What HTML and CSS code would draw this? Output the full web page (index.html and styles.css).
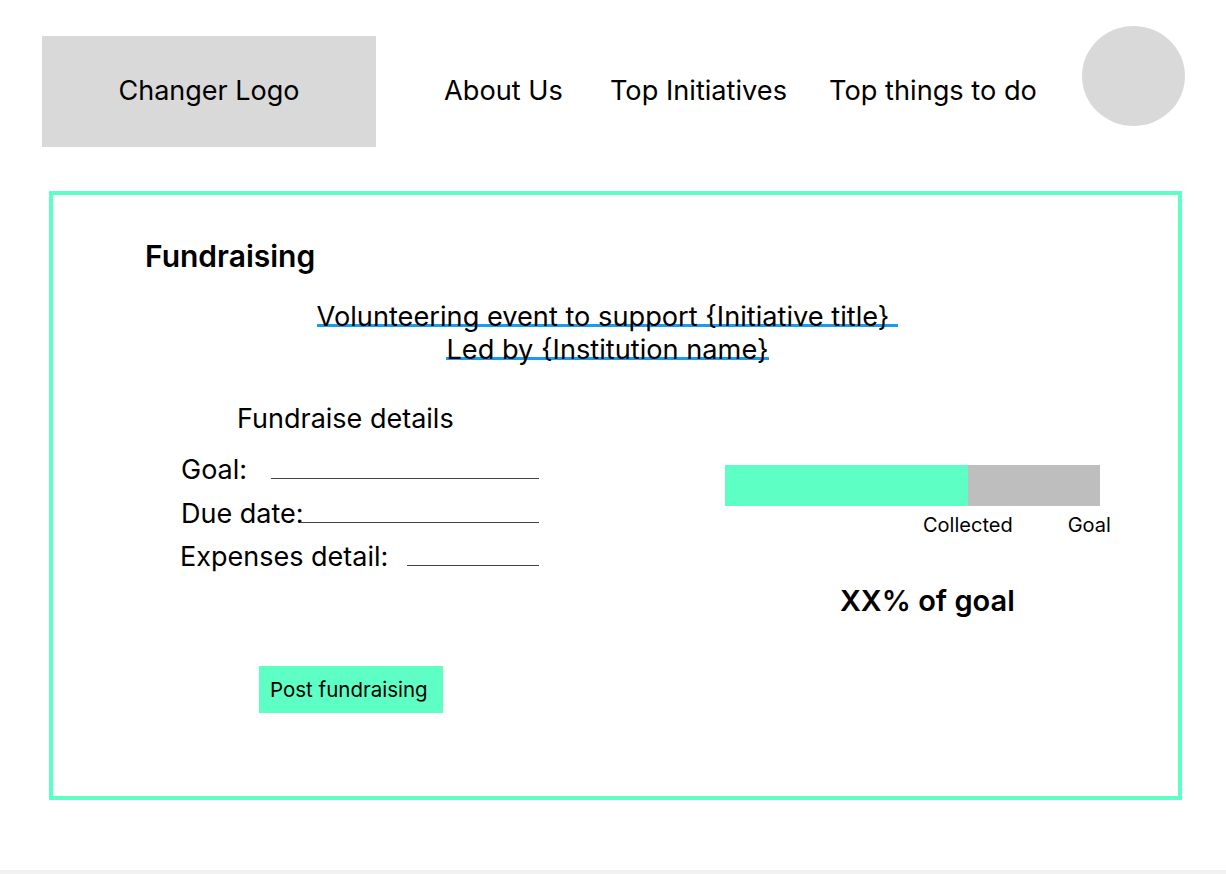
FILE: index.html
```html
<!DOCTYPE html>
<html lang="en">
<head>
<meta charset="utf-8">
<title>Changer - Fundraising</title>
<link rel="stylesheet" href="styles.css">
</head>
<body>
<div class="page">
  <header class="header">
    <div class="logo">Changer Logo</div>
    <nav class="nav">
      <a class="nav-item">About Us</a>
      <a class="nav-item nav-init">Top Initiatives</a>
      <a class="nav-item nav-todo">Top things to do</a>
    </nav>
    <div class="avatar"></div>
  </header>

  <main class="card">
    <h1 class="title">Fundraising</h1>
    <div class="subtitle">
      <div class="sub-line"><span class="link link-wide">Volunteering event to support {Initiative title}</span></div>
      <div class="sub-line"><span class="link">Led by {Institution name}</span></div>
    </div>

    <div class="details">
      <div class="details-left">
        <div class="details-title">Fundraise details</div>
        <div class="field">
          <span class="field-label">Goal:</span>
          <span class="field-line line-goal"></span>
        </div>
        <div class="field">
          <span class="field-label">Due date:</span>
          <span class="field-line line-due"></span>
        </div>
        <div class="field field-exp">
          <span class="field-label">Expenses detail:</span>
          <span class="field-line line-exp"></span>
        </div>
        <button class="post-btn">Post fundraising</button>
      </div>

      <div class="details-right">
        <div class="bar">
          <div class="bar-fill" style="width: 243px"></div>
        </div>
        <div class="bar-labels">
          <span class="lbl-collected">Collected</span>
          <span class="lbl-goal">Goal</span>
        </div>
        <div class="percent">XX% of goal</div>
      </div>
    </div>
  </main>

  <div class="bottom-strip"></div>
</div>
</body>
</html>
```

FILE: styles.css
```css
* { box-sizing: border-box; }

html, body {
  margin: 0;
  padding: 0;
  background: #ffffff;
}

body {
  font-family: Inter, "Noto Sans", "Liberation Sans", sans-serif;
  color: #000;
  width: 1226px;
  height: 874px;
  overflow: hidden;
}

.page {
  width: 1226px;
  height: 874px;
  display: flex;
  flex-direction: column;
}

/* Header */
.header {
  display: flex;
  align-items: center;
  padding: 36px 41px 0 42px;
  height: 147px;
}

.logo {
  width: 334px;
  height: 111px;
  background: #d9d9d9;
  display: flex;
  align-items: center;
  justify-content: center;
  font-size: 27px;
  line-height: 32px;
  padding-bottom: 2px;
}

.nav {
  display: flex;
  margin-left: 68px;
  padding-bottom: 2px;
}

.nav-item {
  font-size: 27.2px;
  line-height: 32px;
  color: #000;
  text-decoration: none;
}

.nav-init { margin-left: 47px; }
.nav-todo { margin-left: 42px; }

.avatar {
  margin-left: auto;
  align-self: flex-start;
  margin-top: -10px;
  width: 103px;
  height: 100px;
  border-radius: 50%;
  background: #d9d9d9;
}

/* Card */
.card {
  margin: 44px 0 0 49px;
  width: 1133px;
  height: 609px;
  border: 4px solid #5effc5;
  padding-top: 44px;
}

.title {
  margin: 0;
  padding-left: 92px;
  font-size: 30px;
  line-height: 34px;
  font-weight: 600;
}

.subtitle {
  margin-top: 27px;
  padding-right: 16px;
  text-align: center;
  font-size: 27.2px;
}

.sub-line {
  line-height: 33px;
  height: 33px;
}

.link {
  display: inline-block;
  line-height: 14px;
  border-bottom: 3px solid #1a9af0;
}

.link-wide {
  padding-right: 9px;
}

/* Details */
.details {
  display: flex;
  align-items: flex-start;
  margin-top: 38px;
}

.details-left {
  margin-left: 128px;
  width: 544px;
  display: flex;
  flex-direction: column;
  align-items: flex-start;
}

.details-title {
  margin-left: 56px;
  font-size: 27px;
  line-height: 29px;
  margin-bottom: 22px;
}

.field {
  width: 358px;
  display: grid;
  align-items: baseline;
  font-size: 27px;
  line-height: 29px;
  margin-bottom: 14.5px;
}

.field > * {
  grid-area: 1 / 1;
}

.field-label {
  justify-self: start;
}

.field-exp {
  margin-left: -1px;
  width: 359px;
}

.field-line {
  justify-self: end;
  height: 0;
  border-bottom: 1px solid #444;
}

.line-goal { width: 268px; }
.line-due { width: 239px; }
.line-exp { width: 132px; }

.post-btn {
  margin-top: 80px;
  margin-left: 78px;
  width: 184px;
  height: 47px;
  border: none;
  background: #5effc5;
  font-family: inherit;
  font-size: 20.5px;
  color: #000;
  padding: 0 0 0 11px;
  text-align: left;
}

.details-right {
  display: flex;
  flex-direction: column;
  align-items: flex-start;
  padding-top: 61px;
}

.bar {
  width: 375px;
  height: 41px;
  background: #bebebe;
  display: flex;
}

.bar-fill {
  height: 100%;
  background: #5effc5;
}

.bar-labels {
  margin-top: 8px;
  display: flex;
  font-size: 20px;
  line-height: 22px;
  width: 400px;
}

.lbl-collected { margin-left: 198px; }
.lbl-goal { margin-left: 55px; }

.percent {
  margin-top: 48px;
  margin-left: 115px;
  font-size: 29px;
  line-height: 34px;
  font-weight: 600;
}

.bottom-strip {
  margin-top: auto;
  height: 4px;
  background: #f2f2f2;
}
```
